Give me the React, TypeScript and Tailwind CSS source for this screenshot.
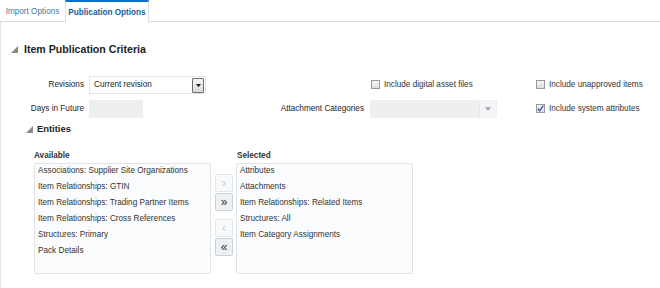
import React from "react";

const Tri = ({ className = "" }: { className?: string }) => (
  <svg width="7" height="7" viewBox="0 0 7 7" className={className}>
    <polygon points="7,0 7,7 0,7" fill="#8a8a8a" />
  </svg>
);

const Checkbox = ({ checked = false }: { checked?: boolean }) => (
  <span className="relative inline-block w-[9px] h-[9px] border border-[#9a9a9a] bg-gradient-to-b from-[#f4f4f4] to-[#dedede] shrink-0">
    {checked && (
      <svg width="9" height="9" viewBox="0 0 9 9" className="absolute -left-[1px] -top-[1px]">
        <path d="M2 4.8 L3.8 6.8 L7.2 1.6" stroke="#2f4fb0" strokeWidth="1.3" fill="none" />
      </svg>
    )}
  </span>
);

const available = [
  "Associations: Supplier Site Organizations",
  "Item Relationships: GTIN",
  "Item Relationships: Trading Partner Items",
  "Item Relationships: Cross References",
  "Structures: Primary",
  "Pack Details",
];
const selected = [
  "Attributes",
  "Attachments",
  "Item Relationships: Related Items",
  "Structures: All",
  "Item Category Assignments",
];

const ShuttleBtn = ({ label, enabled }: { label: string; enabled: boolean }) => (
  <div
    className={
      "w-[18px] h-[18px] flex items-center justify-center rounded-[2px] border text-[12px] leading-none pb-[1px] " +
      (enabled
        ? "border-[#c9d2da] bg-[#eef1f4] text-[#333]"
        : "border-[#e2e7eb] bg-[#f8f9fa] text-[#c4c8cc]")
    }
  >
    {label}
  </div>
);

export default function App() {
  return (
    <div
      className="w-[660px] h-[288px] bg-white overflow-hidden text-[#333] relative"
      style={{ fontFamily: '"Liberation Sans", Arial, sans-serif' }}
    >
      {/* Tabs */}
      <div className="flex h-[22px] items-end">
        <div className="h-[21px] w-[65px] flex items-center justify-center pt-[3px] text-[8.2px] text-[#4a76a3] border-b border-[#d6dfe6]">
          Import Options
        </div>
        <div className="h-[22px] w-[84px] flex items-center justify-center pt-[2px] text-[8.2px] font-bold text-[#145c9e] border-t-2 border-t-[#0572ce] border-x border-x-[#d6dfe6] bg-white">
          Publication Options
        </div>
        <div className="flex-1 h-[21px] border-b border-[#d6dfe6]" />
      </div>

      {/* Content */}
      <div className="border-l border-[#dfe4e8] h-[266px]">
        {/* Header */}
        <div className="flex items-center pl-[10px] pt-[22px] h-[33px]">
          <Tri />
          <span className="ml-[6px] text-[10.6px] font-bold text-[#222] leading-none">
            Item Publication Criteria
          </span>
        </div>

        {/* Form */}
        <div className="grid grid-cols-[83px_117px_154px_161px_1fr] gap-x-[5px] gap-y-[6px] mt-[21px] items-center text-[8.2px]">
          <div className="text-right text-[#222]">Revisions</div>
          <div className="h-[18px] border border-[#dfe4e8] bg-white flex items-center justify-between pl-[4px] pr-[1px]">
            <span className="text-[#222]">Current revision</span>
            <span className="w-[12px] h-[15px] border border-[#6e6e6e] bg-gradient-to-b from-[#f6f6f6] to-[#d9d9d9] flex items-center justify-center rounded-[1px]">
              <svg width="5" height="3" viewBox="0 0 5 3">
                <polygon points="0,0 5,0 2.5,3" fill="#111" />
              </svg>
            </span>
          </div>
          <div />
          <div className="flex items-center gap-[4px] pl-[1px]">
            <Checkbox />
            <span>Include digital asset files</span>
          </div>
          <div className="flex items-center gap-[4px]">
            <Checkbox />
            <span>Include unapproved items</span>
          </div>

          <div className="text-right text-[#222]">Days in Future</div>
          <div>
            <div className="w-[54px] h-[18px] bg-[#eeeff1]" />
          </div>
          <div className="text-right text-[#222] pr-[1px]">Attachment Categories</div>
          <div>
            <div className="w-[127px] h-[18px] bg-[#eeeff1] border border-[#eeeff1] flex justify-end">
              <div className="w-[17px] h-full bg-[#f3f4f6] border-l border-[#e3e6e9] flex items-center justify-center">
                <svg width="6" height="4" viewBox="0 0 6 4">
                  <polygon points="0,0 6,0 3,4" fill="#a8adb2" />
                </svg>
              </div>
            </div>
          </div>
          <div className="flex items-center gap-[4px]">
            <Checkbox checked />
            <span>Include system attributes</span>
          </div>
        </div>

        {/* Entities */}
        <div className="flex items-center pl-[25px] mt-[5px] h-[12px]">
          <Tri />
          <span className="ml-[4px] text-[9.4px] font-bold text-[#222] leading-none">Entities</span>
        </div>

        {/* Shuttle */}
        <div className="flex pl-[33px] mt-[16px] text-[8.2px]">
          <div className="w-[177px]">
            <div className="font-bold text-[#333] h-[10px] leading-[10px]">Available</div>
            <div className="mt-[2px] h-[111px] border border-[#dfe4e8] rounded-[2px] bg-[#fbfcfd] pl-[3px] pt-[1px]">
              {available.map((t) => (
                <div key={t} className="h-[16px] leading-[12px]">{t}</div>
              ))}
            </div>
          </div>
          <div className="w-[18px] ml-[4px] mt-[23px] flex flex-col">
            <ShuttleBtn label="›" enabled={false} />
            <div className="h-[1px]" />
            <ShuttleBtn label="»" enabled />
            <div className="h-[8px]" />
            <ShuttleBtn label="‹" enabled={false} />
            <div className="h-[1px]" />
            <ShuttleBtn label="«" enabled />
          </div>
          <div className="w-[177px] ml-[3px]">
            <div className="font-bold text-[#333] h-[10px] leading-[10px] pl-[1px]">Selected</div>
            <div className="mt-[2px] h-[111px] border border-[#dfe4e8] rounded-[2px] bg-[#fbfcfd] pl-[3px] pt-[1px]">
              {selected.map((t) => (
                <div key={t} className="h-[16px] leading-[12px]">{t}</div>
              ))}
            </div>
          </div>
        </div>
      </div>
    </div>
  );
}
